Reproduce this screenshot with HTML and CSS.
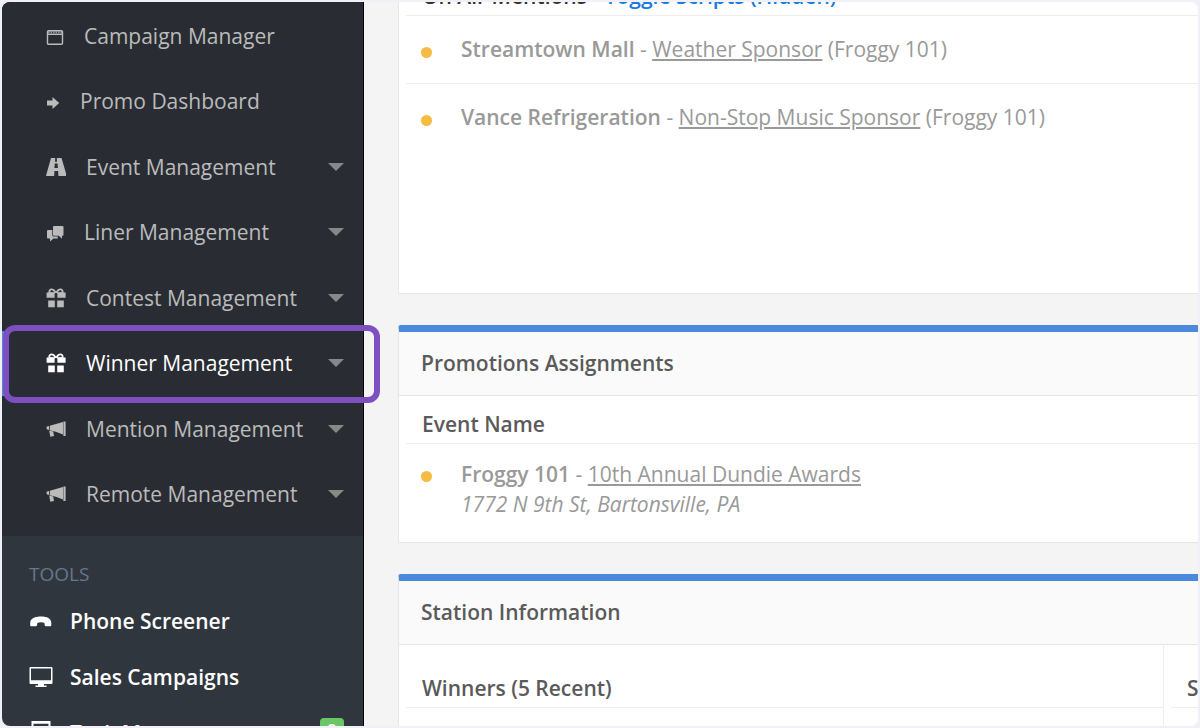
FILE: index.html
```html
<!DOCTYPE html>
<html lang="en">
<head>
    <meta charset="UTF-8">
    <meta name="viewport" content="width=device-width, initial-scale=1.0">
    <title>Promotions Dashboard</title>
    <link rel="stylesheet" href="styles.css">
</head>
<body>
    <svg class="sprite">
        <symbol id="gift" viewBox="0 0 20 20">
            <path d="M1 4.500h1.500C2 2.500 3.500.6 5.500.6c2 0 3.200 1.200 4.500 2.800C11.300 1.800 12.500.6 14.500.6c2 0 3.500 1.900 3 3.900H19.600v5.300h-8.200V5.600L10 4.800 8.600 5.600v4.200H.6V4.500zM4.300 4l3.900.2C7.200 2.900 6.500 2.300 5.500 2.300c-.9 0-1.400.8-1.200 1.700zM15.700 4c.2-.9-.3-1.700-1.200-1.700-1 0-1.700.6-2.700 1.900z" fill-rule="evenodd"/>
            <path d="M2.200 12.500h6.600v6.800H2.200zM11.200 12.500h6.600v6.800h-6.600z"/>
        </symbol>
        <symbol id="horn" viewBox="0 0 20 20">
            <path d="M1 7.500l2-.5v4l-1.800-.6C.3 10 .3 8 1 7.500zM3.800 6.800L17 3v12.500L9.800 12.800 3.800 11.200zM17.400 2.500h2.200v14.500h-2.200zM3.200 11.500l4 1.100.8 4.400-3.700.8z"/>
        </symbol>
    </svg>

    <div class="app">
        <nav class="sidebar">
            <ul class="menu">
                <li>
                    <a href="#">
                        <svg class="icon icon-md" viewBox="0 0 18 20"><path d="M2.500 4.700h13a1 1 0 0 1 1 1v11.600a1 1 0 0 1-1 1h-13a1 1 0 0 1-1-1V5.700a1 1 0 0 1 1-1zM1.500 8.200h15" fill="none" stroke="currentColor" stroke-width="1.400"/><path d="M2 6.200h14" stroke="currentColor" stroke-width="1.200" stroke-dasharray="1.500 1"/></svg>
                        Campaign Manager
                    </a>
                </li>
                <li>
                    <a href="#">
                        <svg class="icon icon-sm" viewBox="0 0 14 20"><path d="M1 9.500h5.500V6L13.200 12 6.500 18V14.500H1z"/></svg>
                        Promo Dashboard
                    </a>
                </li>
                <li>
                    <a href="#">
                        <svg class="icon" viewBox="0 0 20 20"><path d="M5 1h4.200l-.2 3.700h2l-.2-3.700H15.500L20.800 19h-8.300l-.4-5H8.500l-.4 5H-.1zM8.800 6.500l-.4 4.500h3.500l-.4-4.500z" fill-rule="evenodd"/></svg>
                        Event Management
                        <span class="caret"></span>
                    </a>
                </li>
                <li>
                    <a href="#">
                        <svg class="icon icon-md" viewBox="0 0 18 20"><path d="M8 4h8.500a1 1 0 0 1 1 1v7.800a1 1 0 0 1-1 1h-.5v3L12.800 13.800H8a1 1 0 0 1-1-1V5a1 1 0 0 1 1-1z"/><path d="M2 8h4.300v5.300c0 .9.500 1.300 1.500 1.300h4v1.900H7.500L4 19.500v-3H2a1 1 0 0 1-1-1V9a1 1 0 0 1 1-1z"/></svg>
                        Liner Management
                        <span class="caret"></span>
                    </a>
                </li>
                <li>
                    <a href="#">
                        <svg class="icon"><use href="#gift"/></svg>
                        Contest Management
                        <span class="caret"></span>
                    </a>
                </li>
                <li class="active">
                    <a href="#">
                        <svg class="icon"><use href="#gift"/></svg>
                        Winner Management
                        <span class="caret"></span>
                    </a>
                </li>
                <li>
                    <a href="#">
                        <svg class="icon"><use href="#horn"/></svg>
                        Mention Management
                        <span class="caret"></span>
                    </a>
                </li>
                <li>
                    <a href="#">
                        <svg class="icon"><use href="#horn"/></svg>
                        Remote Management
                        <span class="caret"></span>
                    </a>
                </li>
            </ul>

            <h2>TOOLS</h2>
            <ul class="tools">
                <li>
                    <a href="#">
                        <svg class="icon icon-lg" viewBox="0 0 24 24"><path d="M1.200 14C1.200 9.500 6 7.500 12 7.500S22.300 9.500 22.300 14v2.200q0 1-1 1h-4.400q-1 0-1.200-1l-.4-2.500Q12 12.700 8.400 13.700L8 16.200q-.2 1-1.200 1H2.200q-1 0-1-1z"/></svg>
                        Phone Screener
                    </a>
                </li>
                <li>
                    <a href="#">
                        <svg class="icon icon-lg" viewBox="0 0 24 24"><path d="M1.500 2h21a1 1 0 0 1 1 1v15a1 1 0 0 1-1 1H15v1.500h2.500V22h-11v-1.500H9V19H1.500a1 1 0 0 1-1-1V3a1 1 0 0 1 1-1zM2 3.500v11.800h20V3.500z" fill-rule="evenodd"/></svg>
                        Sales Campaigns
                    </a>
                </li>
                <li>
                    <a href="#">
                        <svg class="icon icon-lg" viewBox="0 0 24 24"><path d="M2.500 0h19v20h-19zM4.500 2.800V18h15V2.800z" fill-rule="evenodd"/></svg>
                        Task Manager
                        <span class="badge">2</span>
                    </a>
                </li>
            </ul>
        </nav>

        <main class="content">
            <section class="card card-mentions">
                <h3>On Air Mentions - <a href="#">Toggle Scripts (Hidden)</a></h3>
                <ul class="list">
                    <li><p><b>Streamtown Mall</b> - <a href="#">Weather Sponsor</a> (Froggy 101)</p></li>
                    <li><p><b>Vance Refrigeration</b> - <a href="#">Non-Stop Music Sponsor</a> (Froggy 101)</p></li>
                </ul>
            </section>

            <section class="card card-blue">
                <h2>Promotions Assignments</h2>
                <h3>Event Name</h3>
                <ul class="list list-events">
                    <li>
                        <p><b>Froggy 101</b> - <a href="#">10th Annual Dundie Awards</a><br>
                        <i>1772 N 9th St, Bartonsville, PA</i></p>
                    </li>
                </ul>
            </section>

            <section class="card card-blue">
                <h2>Station Information</h2>
                <div class="columns">
                    <div class="column">
                        <h3>Winners (5 Recent)</h3>
                    </div>
                    <div class="column column-next">
                        <h3>S</h3>
                    </div>
                </div>
            </section>
        </main>
    </div>
</body>
</html>
```

FILE: styles.css
```css
* {
    box-sizing: border-box;
}

body {
    margin: 0;
    padding: 2px;
    background: #f1f0f7;
    font-family: "Open Sans", sans-serif;
    font-size: 21px;
}

h2, h3, p, ul {
    margin: 0;
    padding: 0;
}

ul {
    list-style: none;
}

.sprite {
    display: none;
}

.app {
    display: flex;
    height: calc(100vh - 4px);
    overflow: hidden;
    border-radius: 8px;
    background: #f4f4f4;
}

/* sidebar */

.sidebar {
    flex: 0 0 362px;
    background: #30363e;
    border-right: 1px solid #000;
}

.menu {
    display: grid;
    grid-auto-rows: 1fr;
    height: 534px;
    padding: 1px 0 9px;
    background: #292d33;
}

.menu li {
    position: relative;
}

.sidebar a {
    display: flex;
    align-items: center;
    height: 100%;
    color: #bbb;
    text-decoration: none;
}

.menu a {
    padding: 0 19px 0 44px;
}

.menu .active a {
    color: #fff;
    border-left: 2px solid #4a8bdb;
    padding-left: 42px;
}

/* highlight ring round the current section */
.menu .active::after {
    content: "";
    position: absolute;
    z-index: 1;
    top: -6px;
    bottom: -7px;
    left: 1px;
    right: -17px;
    border: 6px solid #7e4fc1;
    border-radius: 12px;
    pointer-events: none;
}

.icon {
    flex: none;
    width: 20px;
    height: 20px;
    margin-right: 20px;
    fill: currentColor;
}

.icon-sm {
    width: 14px;
}

.icon-md {
    width: 18px;
}

.icon-lg {
    width: 24px;
    height: 24px;
    margin-right: 17px;
}

.caret {
    margin-left: auto;
    border: 8px solid transparent;
    border-top-color: #888;
    border-bottom: 0;
}

.sidebar h2 {
    padding: 24px 27px 5px;
    color: #67768d;
    font-size: 19px;
    font-weight: 500;
    line-height: 28px;
}

.tools li {
    height: 56px;
}

.tools a {
    padding: 0 19px 0 27px;
    color: #fff;
    font-weight: 600;
}

.badge {
    margin: 0 0 6px auto;
    width: 24px;
    border-radius: 4px;
    background: #6cc665;
    font-size: 16px;
    line-height: 24px;
    text-align: center;
}

/* content */

.content {
    flex: 1;
    min-width: 0;
    padding-left: 34px;
    color: #999;
}

.card {
    margin-bottom: 31px;
    border: 1px solid #e6e6e6;
    border-right: 0;
    background: #fff;
}

.card h2 {
    padding: 0 22px;
    border-bottom: 1px solid #e6e6e6;
    background: #fafafa;
    color: #5a5a5a;
    font-size: 21px;
    font-weight: 600;
    line-height: 63px;
}

.card h3 {
    margin-left: 7px;
    padding: 10px 0 1px 16px;
    border-bottom: 1px solid #eee;
    color: #5a5a5a;
    font-size: 21px;
    font-weight: 600;
    line-height: 36px;
}

/* scrolled part way out of view */
.card-mentions {
    height: 327px;
    margin-top: -35px;
}

.card-mentions h3 {
    color: #333;
}

.card-mentions h3 a {
    color: #1a7be0;
    text-decoration: none;
}

.card-blue {
    border-top: 7px solid #4a89dc;
    border-radius: 3px 0 0 0;
}

.list {
    margin-left: 7px;
}

.list li {
    position: relative;
    padding: 18px 55px 19px;
    border-bottom: 1px solid #eee;
    line-height: 30px;
}

.list li:last-child {
    border-bottom: 0;
}

.list li::before {
    content: "";
    position: absolute;
    top: 31px;
    left: 15px;
    width: 11px;
    height: 11px;
    border-radius: 50%;
    background: #f6bb42;
}

.list-events li {
    padding: 15px 55px 23px;
}

.list-events li::before {
    top: 27px;
}

.list b {
    font-weight: 600;
}

.list a {
    color: inherit;
}

.columns {
    display: flex;
    height: 100px;
}

.column {
    flex: 1;
    min-width: 0;
}

.column-next {
    flex: 0 0 35px;
    border-left: 1px solid #eee;
}

.column h3 {
    padding-top: 25px;
}
```
